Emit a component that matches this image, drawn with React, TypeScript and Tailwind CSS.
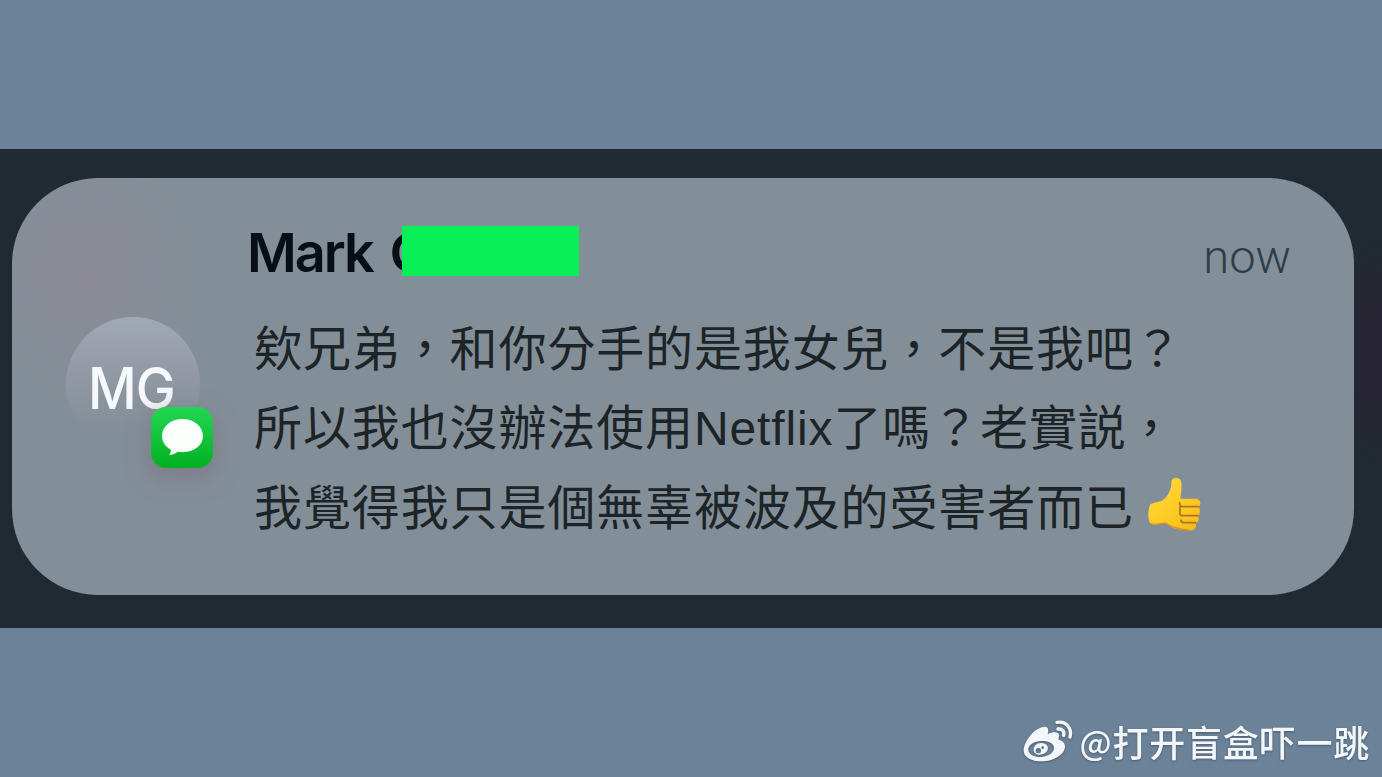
import React from "react";

const messageLines = [
  "欸兄弟，和你分手的是我女兒，不是我吧？",
  "所以我也沒辦法使用Netflix了嗎？老實説，",
  "我覺得我只是個無辜被波及的受害者而已",
];

export default function App() {
  return (
    <main className="flex h-screen w-full flex-col overflow-hidden bg-[#6b8298] pt-[149px]">
      <section className="h-[479px] shrink-0 bg-[#1f2a32] bg-[radial-gradient(ellipse_50px_120px_at_1382px_205px,#272533_40%,#1f2a3200)] pt-[29px] pr-7 pl-3">
        <Notification />
      </section>
      <footer className="flex flex-1 items-end justify-end pr-[12px] pb-[13px]">
        <Watermark />
      </footer>
    </main>
  );
}

const Notification = () => {
  return (
    <article className="flex h-[417px] rounded-[86px] bg-[#838f98] bg-[radial-gradient(ellipse_110px_130px_at_75px_95px,#8c8a97_0%,#8c8a9700_100%)] pr-[63px] pl-[54px]">
      <Avatar />
      <div className="ml-[47px] flex-1 pt-[38px]">
        <header className="flex h-[70px] items-center justify-between">
          <h1 className="relative pt-1 font-['Inter'] text-[54px] leading-[70px] font-semibold tracking-[-2px] whitespace-nowrap text-[#080e16]">
            Mark <span className="pl-[5px]">G</span>
            <span className="absolute top-[12px] left-[155px] h-[50px] w-[177px] bg-[#08f055]" />
          </h1>
          <time className="pt-[12px] font-['Roboto'] text-[47px] leading-[60px] font-light text-[#303d46]">
            now
          </time>
        </header>
        <div className="mt-[24px] ml-[7px] font-['Liberation_Sans','Noto_Sans_CJK_TC',sans-serif] text-[48px] tracking-[0.88px] whitespace-nowrap text-[#1d2427]">
          {messageLines.map((line, index) => (
            <p key={line} className="flex h-[79.5px] items-center">
              {line}
              {index === 2 && <ThumbsUp />}
            </p>
          ))}
        </div>
      </div>
    </article>
  );
};

const Avatar = () => {
  return (
    <div className="relative mt-[139px] h-[134px] w-[134px] shrink-0 rounded-full bg-[linear-gradient(180deg,#a1a9b4_0%,#939aa5_40%,#838f9800_82%)]">
      <p className="origin-left scale-x-[0.92] pt-[36px] pl-[24px] font-['Inter'] text-[58px] leading-[70px] font-medium tracking-[-1px] whitespace-nowrap text-[#f6f8fc]">
        MG
      </p>
      <MessagesBadge />
    </div>
  );
};

const MessagesBadge = () => {
  return (
    <div className="absolute top-[90px] left-[85px] flex h-[61px] w-[62px] items-center justify-center rounded-[15px] bg-linear-to-b from-[#22d651] to-[#00b020] shadow-[0_8px_20px_4px_#7d748599]">
      <svg className="h-[39px] w-[43px]" viewBox="0 0 44 40" fill="#fbfffc">
        <path d="M22 1C10 1 1 8.500 1 18.500c0 6 3.500 11 9 14 .5 2-.5 4-2 5.500 4 0 7-1.500 9-3.300 1.600.2 3.300.3 5 .3 12 0 21-7 21-16.500S34 1 22 1Z" />
      </svg>
    </div>
  );
};

const ThumbsUp = () => {
  return (
    <svg
      className="-mt-[10px] ml-[12px] h-[56px] w-[56px]"
      viewBox="24 20 168 168"
      fill="none"
    >
      <defs>
        <linearGradient id="thumb" x1="0" y1="0" x2="1" y2="1">
          <stop offset="0" stopColor="#ffdc3c" />
          <stop offset="0.55" stopColor="#fecb24" />
          <stop offset="1" stopColor="#f6b81f" />
        </linearGradient>
      </defs>
      <path
        d="M100 38C100 22 130 22 130 40C132 60 128 75 127 88H172C190 88 190 108 182 112C188 118 186 136 180 140C184 148 182 158 174 162C176 178 166 184 156 183C130 182 115 180 100 172C88 164 78 160 70 162C56 168 44 168 36 160C28 145 30 118 38 104C60 96 72 98 82 86C98 66 100 56 100 38Z"
        fill="url(#thumb)"
      />
      <path
        d="M182 112H136c-8 0-11-4-11-12M126 111v22c0 5 3 6 8 6h46M129 152c0 5 3 8 8 8h36"
        stroke="#a8761c"
        strokeWidth="5"
        strokeLinecap="round"
      />
      <path
        d="M38 163c20 6 36-5 46-1c20 14 42 18 72 21"
        stroke="#dc9420"
        strokeWidth="4"
        strokeLinecap="round"
      />
    </svg>
  );
};

const WeiboLogo = () => {
  return (
    <svg className="h-[42px] w-[50px]" viewBox="0 0 150 126" fill="none">
      <path
        fill="currentColor"
        fillRule="evenodd"
        d="M2 92C2 62 40 18 66 20C77 21 77 31 74 42C90 35 108 34 108 46C109 51 105 57 107 59C118 62 127 69 126 81C124 104 92 124 56 124C26 124 2 112 2 92ZM16 91C18 105 35 113 56 111C78 109 95 97 93 82C91 68 73 61 52 63C30 65 14 77 16 91Z"
      />
      <path
        fill="currentColor"
        fillRule="evenodd"
        d="M54 69C41 69 31 79 32 91C33 102 45 107 57 103C69 100 77 90 74 80C72 73 64 69 54 69ZM46 84a8 8 0 1 0 .1 16a8 8 0 0 0 0-16ZM59 79a4 4 0 1 0 .1 8a4 4 0 0 0 0-8Z"
      />
      <path
        d="M102 7c26-5 46 16 39 44M105 27c13-1 20 7 17 19"
        stroke="currentColor"
        strokeWidth="10"
        strokeLinecap="round"
      />
    </svg>
  );
};

const Watermark = () => {
  return (
    <div className="flex items-center gap-[7px] text-[#f4f7fa] drop-shadow-[0_1px_1px_#33445599]">
      <WeiboLogo />
      <p className="flex font-['Noto_Sans_CJK_SC',sans-serif] text-[36px] leading-[46px] font-medium tracking-[0.8px] whitespace-nowrap">
        <span className="text-[33px]">@</span>打开盲盒吓一跳
      </p>
    </div>
  );
};
